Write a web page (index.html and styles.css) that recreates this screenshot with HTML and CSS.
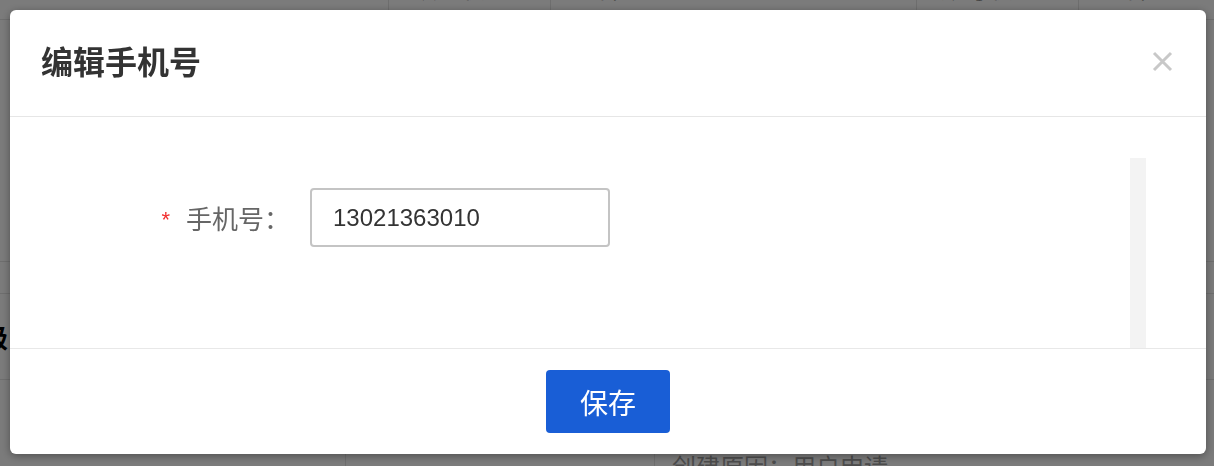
FILE: index.html
```html
<!DOCTYPE html>
<html lang="zh-CN">
<head>
  <meta charset="UTF-8">
  <meta name="viewport" content="width=device-width, initial-scale=1.0">
  <title>编辑手机号</title>
  <link rel="stylesheet" href="styles.css">
</head>
<body>
  <!-- Seite im Hintergrund -->
  <div class="page">
    <div class="filter-row">
      <div class="cell"></div>
      <div class="cell">认证状态</div>
      <div class="cell">全部</div>
      <div class="cell">账号状态</div>
      <div class="cell">全部</div>
    </div>
    <div class="list-block"></div>
    <div class="list-row"></div>
    <div class="section-title">级</div>
    <div class="detail-row">
      <div class="cell"></div>
      <div class="cell"></div>
      <div class="cell">创建原因：用户申请</div>
    </div>
  </div>

  <!-- Dialog -->
  <div class="mask">
    <div class="modal">
      <div class="modal-header">
        <h2 class="modal-title">编辑手机号</h2>
        <button class="modal-close" type="button" aria-label="关闭">
          <svg width="21" height="21" viewBox="0 0 21 21">
            <path d="M2 2 L19 19 M19 2 L2 19" stroke="#c8c8c8" stroke-width="3" fill="none"/>
          </svg>
        </button>
      </div>

      <div class="modal-body">
        <div class="scroll-area">
          <form class="form-item">
            <label class="form-label" for="phone"><span class="required">*</span>手机号：</label>
            <input class="form-input" type="text" id="phone" value="13021363010">
          </form>
        </div>
        <div class="scroll-track"></div>
      </div>

      <div class="modal-footer">
        <button class="btn-primary" type="button">保存</button>
      </div>
    </div>
  </div>
</body>
</html>
```

FILE: styles.css
```css
/* Reset */
* {
  box-sizing: border-box;
  margin: 0;
  padding: 0;
}

body {
  font-family: "Liberation Sans", "Noto Sans CJK SC", sans-serif;
  background: #f6f6f6;
  color: #333;
  width: 1214px;
  height: 466px;
  overflow: hidden;
}

/* Hintergrundseite */
.page {
  width: 1214px;
}

.filter-row {
  display: grid;
  grid-template-columns: 388px 162px 366px 162px 136px;
  height: 50px;
  margin-top: -30px;
  border-bottom: 1px solid #ddd;
}
.filter-row .cell {
  border-left: 1px solid #ddd;
  padding: 8px 0 0 24px;
  font-size: 24px;
  line-height: 24px;
  color: #555;
}
.filter-row .cell:first-child {
  border-left: none;
}

.list-block {
  height: 242px;
  border-bottom: 1px solid #ddd;
}
.list-row {
  height: 32px;
  border-bottom: 1px solid #ddd;
}

.section-title {
  height: 86px;
  margin-left: -18px;
  padding-top: 30px;
  font-size: 26px;
  line-height: 30px;
  font-weight: bold;
  color: #000;
  border-bottom: 1px solid #ddd;
}

.detail-row {
  display: grid;
  grid-template-columns: 345px 309px 1fr;
  height: 100px;
}
.detail-row .cell {
  border-left: 1px solid #ddd;
  padding: 74px 0 0 17px;
  font-size: 24px;
  line-height: 28px;
  color: #999;
}
.detail-row .cell:first-child {
  border-left: none;
}

/* Maske + Dialog */
.mask {
  position: fixed;
  top: 0;
  left: 0;
  right: 0;
  bottom: 0;
  background: rgba(0, 0, 0, 0.5);
  padding: 10px 8px 0 10px;
}

.modal {
  width: 1196px;
  height: 444px;
  background: #fff;
  border-radius: 6px;
  box-shadow: 0 2px 8px rgba(0, 0, 0, 0.35);
  display: flex;
  flex-direction: column;
}

.modal-header {
  height: 107px;
  border-bottom: 1px solid #e6e6e6;
  display: flex;
  justify-content: space-between;
  align-items: center;
  padding: 0 33px 4px 31px;
}
.modal-title {
  font-size: 32px;
  font-weight: bold;
  color: #333;
  line-height: 40px;
  margin-top: 4px;
}
.modal-close {
  border: none;
  background: none;
  width: 21px;
  height: 21px;
  display: block;
  cursor: pointer;
}
.modal-close svg {
  display: block;
}

.modal-body {
  height: 231px;
  display: flex;
  padding: 41px 60px 0 0;
}
.scroll-area {
  flex: 1;
  padding-top: 30px;
}
.scroll-track {
  width: 16px;
  background: #f3f3f3;
}

.form-item {
  display: flex;
  align-items: center;
}
.form-label {
  width: 280px;
  margin-right: 20px;
  display: flex;
  justify-content: flex-end;
  align-items: center;
  font-size: 26px;
  color: #666;
}
.required {
  color: #f23030;
  font-size: 22px;
  margin-right: 16px;
  position: relative;
  top: 2px;
}
.form-input {
  width: 300px;
  height: 59px;
  border: 2px solid #c4c4c4;
  border-radius: 4px;
  padding: 0 21px;
  font-family: inherit;
  font-size: 24px;
  color: #333;
  outline: none;
}

.modal-footer {
  flex: 1;
  border-top: 1px solid #e8e8e8;
  display: flex;
  justify-content: center;
  align-items: center;
}
.btn-primary {
  width: 124px;
  height: 63px;
  background: #195ed6;
  color: #fff;
  border: none;
  border-radius: 4px;
  font-family: inherit;
  font-size: 28px;
  cursor: pointer;
}
```
